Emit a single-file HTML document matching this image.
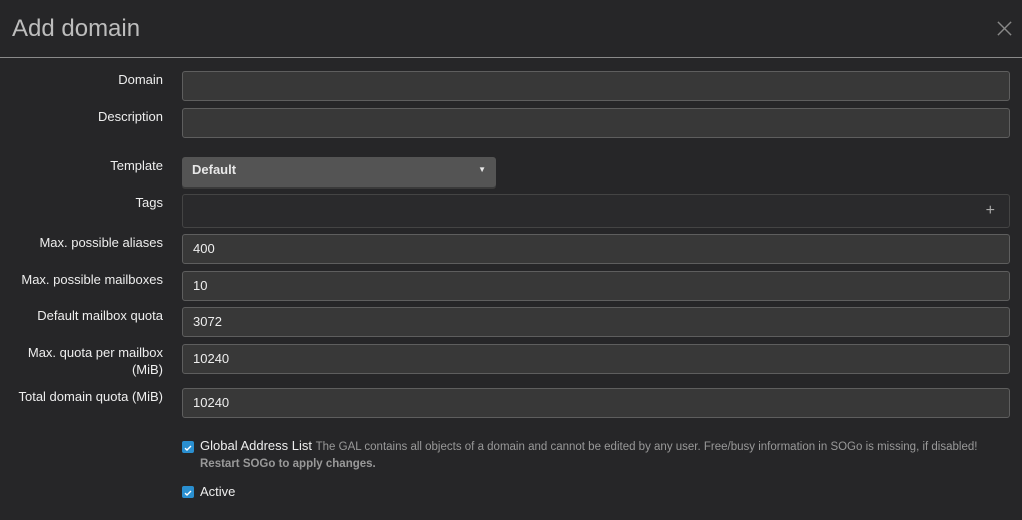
<!DOCTYPE html>
<html><head><style>
body{margin:0;width:1022px;height:520px;background:#262628;font-family:"Liberation Sans",sans-serif;color:#e8e8e8;overflow:hidden;position:relative}
.h{position:absolute;left:12px;top:15px;font-size:24px;color:#bdbdbd}
.x{position:absolute;left:996px;top:20px;width:17px;height:17px}
.line{position:absolute;left:0;top:57px;width:1022px;height:1px;background:#8a8a8a}
.l{position:absolute;right:859px;font-size:13px;text-align:right;line-height:17px;color:#eee}
.i{position:absolute;left:182px;width:828px;background:#383838;border:1px solid #5e5e5e;border-radius:3px;font-size:13px;line-height:27px;box-sizing:border-box;padding-left:10px;color:#eee}
.sel{position:absolute;left:182px;top:157px;width:314px;height:30px;background:#545454;border-radius:3px;font-size:13px;font-weight:bold;line-height:25px;padding-left:10px;box-sizing:border-box;box-shadow:0 2px 0 #3a3a3a}
.cb{position:absolute;left:182px;width:12px;height:12px;background:#2a8fd0;border-radius:2px}
</style></head><body>
<div class="h">Add domain</div>
<svg class="x" viewBox="0 0 18 18"><path d="M2 2L16 16M16 2L2 16" stroke="#888" stroke-width="1.5"/></svg>
<div class="line"></div>
<div class="l" style="top:71px">Domain</div><div class="i" style="top:71px;height:30px"></div>
<div class="l" style="top:108px">Description</div><div class="i" style="top:108px;height:30px"></div>
<div class="l" style="top:157px">Template</div>
<div class="sel">Default<span style="position:absolute;right:10px;top:0;font-size:8px">▼</span></div>
<div class="l" style="top:194px">Tags</div><div class="i" style="top:194px;height:34px;background:#2a2a2c;border-color:#444"><span style="position:absolute;right:14px;top:2px;color:#aaa;font-size:16px">+</span></div>
<div class="l" style="top:234px">Max. possible aliases</div><div class="i" style="top:234px;height:30px">400</div>
<div class="l" style="top:271px">Max. possible mailboxes</div><div class="i" style="top:271px;height:30px">10</div>
<div class="l" style="top:307px">Default mailbox quota</div><div class="i" style="top:307px;height:30px">3072</div>
<div class="l" style="top:344px">Max. quota per mailbox<br>(MiB)</div><div class="i" style="top:344px;height:30px">10240</div>
<div class="l" style="top:388px">Total domain quota (MiB)</div><div class="i" style="top:388px;height:30px">10240</div>
<div class="cb" style="top:441px"><svg viewBox="0 0 12 12" width="12" height="12"><path d="M3 6.2L5 8L9 4" stroke="#fff" stroke-width="1.4" fill="none"/></svg></div>
<div style="position:absolute;left:200px;top:438px;font-size:13px;color:#eee">Global Address List <span style="font-size:11.5px;color:#999">The GAL contains all objects of a domain and cannot be edited by any user. Free/busy information in SOGo is missing, if disabled!</span></div>
<div style="position:absolute;left:200px;top:458px;font-size:11.5px;color:#999;font-weight:bold">Restart SOGo to apply changes.</div>
<div class="cb" style="top:486px"><svg viewBox="0 0 12 12" width="12" height="12"><path d="M3 6.2L5 8L9 4" stroke="#fff" stroke-width="1.4" fill="none"/></svg></div>
<div style="position:absolute;left:200px;top:484px;font-size:13px;color:#eee">Active</div>
</body></html>
